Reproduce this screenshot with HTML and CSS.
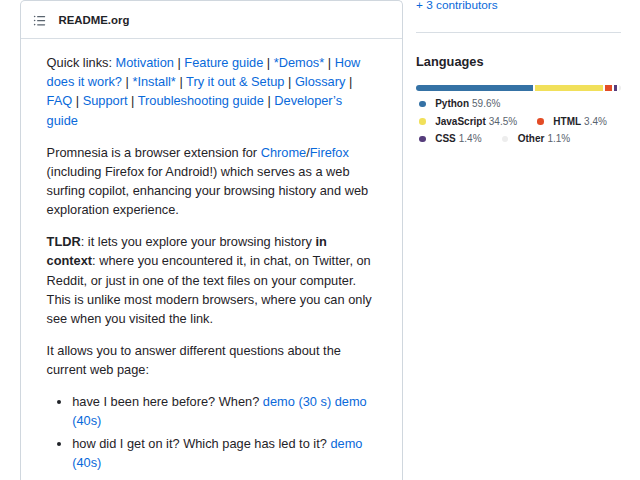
FILE: index.html
```html
<!DOCTYPE html>
<html>
<head>
<meta charset="utf-8">
<link rel="stylesheet" href="styles.css">
</head>
<body>
<div class="page">
  <div class="readme">
    <div class="readme-head">
      <svg class="list-icon" viewBox="0 0 16 16" width="13" height="13"><path fill="#59636e" d="M5.75 2.5h8.5a.75.75 0 0 1 0 1.5h-8.5a.75.75 0 0 1 0-1.5Zm0 5h8.5a.75.75 0 0 1 0 1.5h-8.5a.75.75 0 0 1 0-1.5Zm0 5h8.5a.75.75 0 0 1 0 1.5h-8.5a.75.75 0 0 1 0-1.5ZM2 14a1 1 0 1 1 0-2 1 1 0 0 1 0 2Zm1-6a1 1 0 1 1-2 0 1 1 0 0 1 2 0ZM2 4a1 1 0 1 1 0-2 1 1 0 0 1 0 2Z"/></svg>
      <span class="readme-title">README.org</span>
    </div>
    <div class="markdown">
      <p>Quick links: <a>Motivation</a> | <a>Feature guide</a> | <a>*Demos*</a> | <a>How does it work?</a> | <a>*Install*</a> | <a>Try it out &amp; Setup</a> | <a>Glossary</a> | <a>FAQ</a> | <a>Support</a> | <a>Troubleshooting guide</a> | <a>Developer’s guide</a></p>
      <p>Promnesia is a browser extension for <a>Chrome</a>/<a>Firefox</a> (including Firefox for Android!) which serves as a web surfing copilot, enhancing your browsing history and web exploration experience.</p>
      <p><b>TLDR</b>: it lets you explore your browsing history <b>in context</b>: where you encountered it, in chat, on Twitter, on Reddit, or just in one of the text files on your computer. This is unlike most modern browsers, where you can only see when you visited the link.</p>
      <p>It allows you to answer different questions about the current web page:</p>
      <ul>
        <li>have I been here before? When? <a>demo (30 s)</a> <a>demo (40s)</a></li>
        <li>how did I get on it? Which page has led to it? <a>demo (40s)</a></li>
      </ul>
    </div>
  </div>
  <div class="sidebar">
    <div class="contrib"><a>+ 3 contributors</a></div>
    <div class="langs">
      <h2>Languages</h2>
      <div class="bar">
        <span class="seg py" style="flex-grow:59.6"></span>
        <span class="seg js" style="flex-grow:34.5"></span>
        <span class="seg html" style="flex-grow:3.4"></span>
        <span class="seg css" style="flex-grow:1.4"></span>
        <span class="seg other" style="flex-grow:1.1"></span>
      </div>
      <ul class="lang-list">
        <li><span class="dot py"></span><span class="name">Python</span><span class="pct">59.6%</span></li>
        <li><span class="dot js"></span><span class="name">JavaScript</span><span class="pct">34.5%</span></li>
        <li><span class="dot html"></span><span class="name">HTML</span><span class="pct">3.4%</span></li>
        <li><span class="dot css"></span><span class="name">CSS</span><span class="pct">1.4%</span></li>
        <li><span class="dot other"></span><span class="name">Other</span><span class="pct">1.1%</span></li>
      </ul>
    </div>
  </div>
</div>
</body>
</html>
```
FILE: styles.css
```css
* { box-sizing: border-box; }
html, body { margin: 0; padding: 0; background: #fff; }
body {
  font-family: "Liberation Sans", Arial, sans-serif;
  color: #1f2328;
  overflow: hidden;
  height: 480px;
}
a { color: #0969da; text-decoration: none; }

.page {
  display: flex;
  align-items: flex-start;
  padding-left: 20px;
}

.readme {
  width: 383px;
  height: 480px;
  border: 1px solid #d0d7de;
  border-bottom: none;
  border-radius: 5px 5px 0 0;
  flex-shrink: 0;
  overflow: hidden;
}
.readme-head {
  height: 38px;
  border-bottom: 1px solid #d8dee4;
  display: flex;
  align-items: center;
  padding: 1px 0 0 12px;
  gap: 12.5px;
}
.list-icon { display: block; }
.readme-title {
  font-size: 11.4px;
  font-weight: 700;
}

.markdown {
  padding: 14px 25.6px 0 25.6px;
  font-size: 12.8px;
  line-height: 19.2px;
}
.markdown p { margin: 0 0 12.8px 0; }
.markdown b { font-weight: 700; }
.markdown ul { margin: 0; padding-left: 25.6px; }
.markdown li + li { margin-top: 3.2px; }

.sidebar {
  width: 205px;
  margin-left: 13px;
  flex-shrink: 0;
}
.contrib {
  font-size: 11.8px;
  line-height: 10px;
  height: 10px;
  margin-bottom: 22px;
}
.langs {
  border-top: 1px solid #d8dee4;
  padding-top: 19.4px;
}
.langs h2 {
  margin: 0;
  font-size: 12.8px;
  line-height: 19.2px;
  font-weight: 600;
}
.bar {
  display: flex;
  gap: 2px;
  height: 6px;
  margin-top: 13px;
  border-radius: 6px;
  overflow: hidden;
}
.seg { flex-basis: 0; display: block; height: 100%; }
.py { background: #3572a5; }
.js { background: #f1e05a; }
.html { background: #e34c26; }
.css { background: #563d7c; }
.other { background: #ededed; }

.lang-list {
  list-style: none;
  margin: 4.5px 0 0 0;
  padding: 0;
  display: flex;
  flex-wrap: wrap;
  column-gap: 17px;
  font-size: 10px;
  line-height: 17.5px;
}
.lang-list li { display: flex; align-items: center; white-space: nowrap; }
.lang-list li:first-child { margin-right: 100px; }
.dot {
  width: 6.4px;
  height: 6.4px;
  border-radius: 50%;
  margin: 0 9.6px 0 3.2px;
}
.name { font-weight: 700; color: #1f2328; margin-right: 3px; }
.pct { color: #59636e; }
```
